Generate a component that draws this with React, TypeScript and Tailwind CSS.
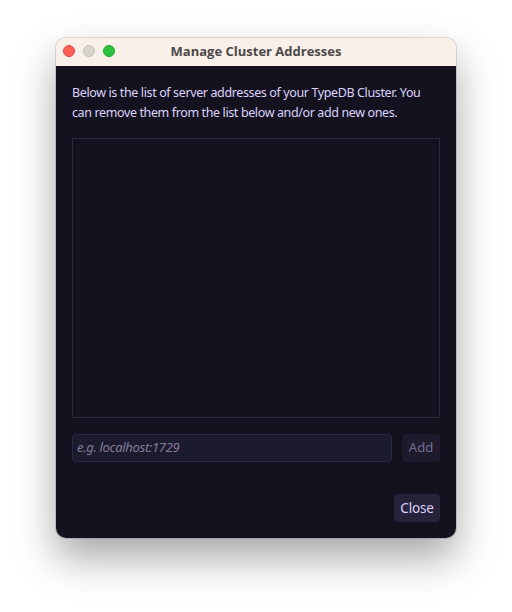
import React from 'react';

export default function App() {
  return (
    <div className="w-[512px] h-[612px] bg-white pt-[38px] pl-[56px]">
      <div className="w-[400px] h-[500px] rounded-[10px] overflow-hidden flex flex-col shadow-[0_20px_40px_rgba(0,0,0,0.35),0_0_0_1px_rgba(0,0,0,0.12)]">
        {/* Title bar */}
        <div className="h-[28px] bg-[#faf0ea] relative flex items-center justify-center shrink-0">
          <div className="absolute left-[7px] top-[7px] flex gap-[8px]">
            <span className="w-[12px] h-[12px] rounded-full bg-[#fe5f57] border border-[#e2463f]" />
            <span className="w-[12px] h-[12px] rounded-full bg-[#d8d2cd] border border-[#c2bbb5]" />
            <span className="w-[12px] h-[12px] rounded-full bg-[#29c140] border border-[#1ea432]" />
          </div>
          <span className="text-[13px] font-bold text-[#4c4847] font-['Open_Sans',sans-serif]">Manage Cluster Addresses</span>
        </div>
        {/* Body */}
        <div className="flex-1 bg-[#14121f] px-[16px] pt-[17px] pb-[16px] flex flex-col font-['Noto_Sans',sans-serif]">
          <p className="text-[12.5px] leading-[20px] text-[#dcd2fc] tracking-[-0.38px]">
            Below is the list of server addresses of your TypeDB Cluster. You can remove them from the list below and/or add new ones.
          </p>
          <div className="mt-[15px] h-[280px] border border-[#2c2840]" />
          <div className="mt-[16px] flex gap-[10px]">
            <div className="flex-1 h-[28px] rounded-[4px] bg-[#1c1a2d] border border-[#2e2a46] flex items-center px-[4px]">
              <span className="text-[13px] italic text-[#847c9c] tracking-[-0.3px]">e.g. localhost:1729</span>
            </div>
            <button className="w-[38px] h-[28px] rounded-[4px] bg-[#1e1b2e] text-[13px] text-[#766e8f]">Add</button>
          </div>
          <div className="mt-auto flex justify-end">
            <button className="w-[46px] h-[28px] rounded-[4px] bg-[#25223a] text-[13.5px] text-[#ddd3fb] tracking-[-0.2px]">Close</button>
          </div>
        </div>
      </div>
    </div>
  );
}
